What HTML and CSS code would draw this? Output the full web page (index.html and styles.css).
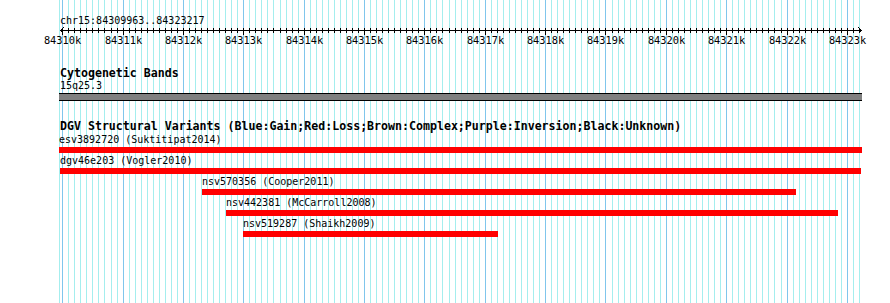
FILE: index.html
```html
<!DOCTYPE html>
<html>
<head>
  <meta charset="utf-8">
  <title>chr15:84309963..84323217</title>
  <link rel="stylesheet" href="styles.css">
</head>
<body>
<div class="browser">
  <div class="grid" id="grid"></div>

  <div class="content">
    <div class="ruler">
      <div class="loc">chr15:84309963..84323217</div>
      <div class="scale" id="scale">
        <svg id="axis" width="890" height="12"></svg>
      </div>
    </div>

    <div class="track bands">
      <div class="track-title">Cytogenetic Bands</div>
      <div class="band-label">15q25.3</div>
      <div class="band"></div>
    </div>

    <div class="track dgv">
      <div class="track-title">DGV Structural Variants (Blue:Gain;Red:Loss;Brown:Complex;Purple:Inversion;Black:Unknown)</div>
      <div class="feature" style="margin-left:-1px">
        <div class="feat-label">esv3892720 (Suktitipat2014)</div>
        <div class="bar loss" style="width:803px"></div>
      </div>
      <div class="feature" style="margin-left:0px">
        <div class="feat-label">dgv46e203 (Vogler2010)</div>
        <div class="bar loss" style="width:801px"></div>
      </div>
      <div class="feature" style="margin-left:142px">
        <div class="feat-label">nsv570356 (Cooper2011)</div>
        <div class="bar loss" style="width:594px"></div>
      </div>
      <div class="feature" style="margin-left:166px">
        <div class="feat-label">nsv442381 (McCarroll2008)</div>
        <div class="bar loss" style="width:612px"></div>
      </div>
      <div class="feature" style="margin-left:183px">
        <div class="feat-label">nsv519287 (Shaikh2009)</div>
        <div class="bar loss" style="width:255px"></div>
      </div>
    </div>
  </div>
</div>
<script src="main.js"></script>
</body>
</html>
```

FILE: styles.css
```css
body {
  margin: 0;
  background: #fff;
  color: #000;
  font-family: "DejaVu Sans Mono", "Liberation Mono", monospace;
}

.browser {
  position: relative;
  width: 890px;
  height: 303px;
  overflow: hidden;
}

/* vertical grid, one line per 100bp */
.grid {
  position: absolute;
  top: 0;
  left: 0;
  right: 0;
  bottom: 0;
}
.gridline {
  position: absolute;
  top: 0;
  bottom: 0;
  width: 1px;
  background: #a4eeee;
}
.gridline.major {
  background: #80c6ec;
}

.content {
  position: relative;
}

/* ruler */
.ruler {
  padding-top: 15px;
}
.loc {
  padding-left: 60px;
  font-size: 10px;
  line-height: 12px;
}
.scale {
  position: relative;
  height: 20px;
}
.scale svg {
  position: absolute;
  left: 0;
  top: 0;
}
.scale-label {
  position: absolute;
  top: 7px;
  font-size: 10.3px;
  line-height: 12px;
  transform: translateX(-50%);
  white-space: nowrap;
}

/* tracks */
.track {
  padding-left: 60px;
}
.track-title {
  font-weight: bold;
  font-size: 11.6px;
  line-height: 13px;
  white-space: nowrap;
}

.bands {
  margin-top: 20px;
}
.band-label {
  font-size: 10px;
  line-height: 12px;
}
.band {
  margin: 1px 0 0 -1px;
  width: 803px;
  height: 6px;
  background: #808080;
  border-top: 1px solid #000;
  border-bottom: 1px solid #000;
}

.dgv {
  margin-top: 19px;
}
.feature {
  margin-bottom: 1px;
}
.feat-label {
  font-size: 10px;
  line-height: 14px;
  white-space: nowrap;
}
.bar {
  height: 6px;
}
.bar.loss {
  background: #ff0000;
}
```

FILE: main.js
```js
// genome -> pixel scale for the visible region
var START = 84309963;
var END = 84323217;
var X0 = 60;
var WIDTH = 800;

function toPx(bp) {
  return X0 + (bp - START) * WIDTH / (END - START);
}

var grid = document.getElementById('grid');
var scale = document.getElementById('scale');
var axis = document.getElementById('axis');
var NS = 'http://www.w3.org/2000/svg';

function addLine(x1, y1, x2, y2) {
  var l = document.createElementNS(NS, 'line');
  l.setAttribute('x1', x1);
  l.setAttribute('y1', y1);
  l.setAttribute('x2', x2);
  l.setAttribute('y2', y2);
  l.setAttribute('stroke', '#000');
  l.setAttribute('stroke-width', '1');
  l.setAttribute('shape-rendering', 'crispEdges');
  axis.appendChild(l);
}

// left edge of the view
var edge = document.createElement('div');
edge.className = 'gridline';
edge.style.left = '59px';
grid.appendChild(edge);

// axis with arrows at both ends
addLine(60, 3.5, 862, 3.5);
addLine(60.5, 3.5, 63.5, 0.5);
addLine(60.5, 3.5, 63.5, 6.5);
addLine(861.5, 3.5, 858.5, 0.5);
addLine(861.5, 3.5, 858.5, 6.5);

for (var bp = 84310000; bp <= END; bp += 100) {
  var x = Math.round(toPx(bp));
  var major = bp % 1000 === 0;

  var g = document.createElement('div');
  g.className = major ? 'gridline major' : 'gridline';
  g.style.left = x + 'px';
  grid.appendChild(g);

  addLine(x + 0.5, 1, x + 0.5, major ? 8 : 6);

  if (major) {
    var lab = document.createElement('div');
    lab.className = 'scale-label';
    lab.style.left = (x + 0.5) + 'px';
    lab.textContent = (bp / 1000) + 'k';
    scale.appendChild(lab);
  }
}
```
